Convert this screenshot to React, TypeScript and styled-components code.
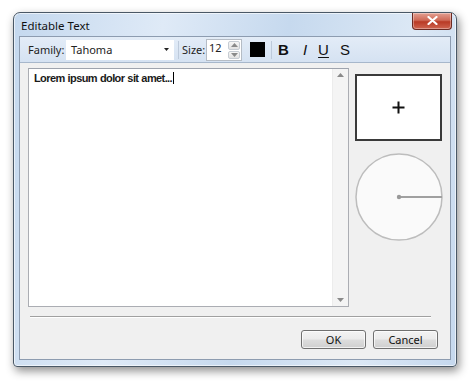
import React from 'react';
import styled, { createGlobalStyle } from 'styled-components';

const GlobalStyle = createGlobalStyle`
	html, body {
		margin: 0;
		padding: 0;
		background: #fff;
		font-family: 'Noto Sans', 'Open Sans', Arial, sans-serif;
	}
`;

const Page = styled.div`
	width: 474px;
	height: 384px;
	padding: 12px 0 0 13px;
	box-sizing: border-box;
`;

const Frame = styled.div`
	width: 444px;
	height: 355px;
	box-sizing: border-box;
	border: 1px solid #4a5866;
	border-radius: 7px 7px 4px 4px;
	background: linear-gradient(100deg, #c4d8ee 0%, #dfeaf7 30%, #c6d9ee 55%, #dce8f5 80%, #c5d8ee 100%);
	box-shadow: 2px 4px 10px rgba(0, 0, 0, 0.45), inset 0 0 0 1px rgba(255, 255, 255, 0.6);
	display: flex;
	flex-direction: column;
	padding: 0 5px 6px 5px;
`;

const TitleBar = styled.div`
	height: 23px;
	display: flex;
	align-items: center;
	justify-content: space-between;
`;

const Title = styled.span`
	font-size: 11.5px;
	color: #111;
	padding: 0 0 0 2px;
	margin-top: 1px;
`;

const CloseButton = styled.div`
	width: 38px;
	height: 16px;
	margin-top: -7px;
	margin-right: -1px;
	border: 1px solid #6b2a22;
	border-top: none;
	border-radius: 0 0 4px 4px;
	background: linear-gradient(180deg, #e3a092 0%, #cf6a57 45%, #b93a25 55%, #cf6550 100%);
	display: flex;
	align-items: center;
	justify-content: center;
	box-shadow: inset 0 0 0 1px rgba(255, 255, 255, 0.35);
`;

const Client = styled.div`
	flex: 1;
	border: 1px solid #8d9cb0;
	background: #f0f0f0;
	display: flex;
	flex-direction: column;
`;

const Toolbar = styled.div`
	height: 25px;
	border-bottom: 1px solid #a7b7cb;
	background: linear-gradient(180deg, #e3ecf7 0%, #d5e2f2 100%);
	display: flex;
	align-items: center;
	padding: 0 0 0 8px;
	font-size: 11px;
	color: #222;
`;

const Label = styled.span<{ $w: number }>`
	width: ${(p) => p.$w}px;
	white-space: nowrap;
`;

const Combo = styled.div`
	width: 108px;
	height: 20px;
	background: #fff;
	display: flex;
	align-items: center;
	justify-content: space-between;
	padding: 0 5px 0 5px;
	box-sizing: border-box;
`;

const Sep = styled.div<{ $l: number; $r: number }>`
	width: 1px;
	height: 18px;
	background: #bdcadb;
	margin: 0 ${(p) => p.$r}px 0 ${(p) => p.$l}px;
`;

const Spin = styled.div`
	width: 36px;
	height: 22px;
	box-sizing: border-box;
	border: 1px solid #b5bcc5;
	background: #fff;
	display: flex;
	justify-content: space-between;
	margin-top: 1px;
`;

const SpinText = styled.span`
	font-size: 11px;
	line-height: 13px;
	padding: 1px 0 0 2px;
`;

const SpinButtons = styled.div`
	width: 12px;
	display: flex;
	flex-direction: column;
	padding: 1px 1px 1px 0;
	gap: 1px;
`;

const SpinBtn = styled.div`
	flex: 1;
	border: 1px solid #c6ccd3;
	border-radius: 2px;
	background: linear-gradient(180deg, #f6f6f6, #e2e2e2);
	display: flex;
	align-items: center;
	justify-content: center;
`;

const Swatch = styled.div`
	width: 15px;
	height: 15px;
	background: #000;
	margin-left: 8px;
`;

const StyleBtn = styled.span<{ $bold?: boolean; $italic?: boolean; $under?: boolean; $w: number; $gap: number }>`
	width: ${(p) => p.$w}px;
	margin-right: ${(p) => p.$gap}px;
	font-family: 'Liberation Sans', Arial, sans-serif;
	font-size: 15px;
	font-weight: ${(p) => (p.$bold ? 'bold' : 'normal')};
	font-style: ${(p) => (p.$italic ? 'italic' : 'normal')};
	text-decoration: ${(p) => (p.$under ? 'underline' : 'none')};
	text-underline-offset: 2px;
	color: #111;
	text-align: center;
`;

const Body = styled.div`
	flex: 1;
	display: flex;
	flex-direction: column;
	padding: 5px 0 0 8px;
`;

const Main = styled.div`
	display: flex;
	gap: 6px;
`;

const TextBox = styled.div`
	width: 321px;
	height: 239px;
	box-sizing: border-box;
	border: 1px solid #abadb3;
	border-top-color: #9ea3ad;
	background: #fff;
	display: flex;
`;

const TextArea = styled.div`
	flex: 1;
	padding: 3px 5px;
	font-family: 'Liberation Sans', Tahoma, sans-serif;
	font-size: 11px;
	font-weight: bold;
	letter-spacing: -0.6px;
	word-spacing: 0.5px;
	color: #1a1a1a;
`;

const Caret = styled.span`
	display: inline-block;
	width: 1px;
	height: 12px;
	margin-left: 1px;
	background: #000;
	vertical-align: -2px;
`;

const ScrollBar = styled.div`
	width: 15px;
	border-left: 1px solid #ececec;
	background: #f4f4f4;
	display: flex;
	flex-direction: column;
	justify-content: space-between;
	align-items: center;
	padding: 4px 0;
`;

const Side = styled.div`
	display: flex;
	flex-direction: column;
	padding-top: 6px;
	gap: 12px;
`;

const Pad = styled.div`
	width: 87px;
	height: 67px;
	box-sizing: border-box;
	border: 2px solid #3a3a3a;
	background: #fff;
	display: flex;
	align-items: center;
	justify-content: center;
`;

const Divider = styled.div`
	height: 1px;
	background: #a0a0a0;
	border-bottom: 1px solid #fff;
	margin: 9px 19px 0 2px;
`;

const Buttons = styled.div`
	display: flex;
	justify-content: flex-end;
	gap: 7px;
	padding: 12px 12px 0 0;
`;

const Button = styled.div`
	width: 65px;
	height: 19px;
	box-sizing: border-box;
	border: 1px solid #707070;
	border-radius: 3px;
	background: linear-gradient(180deg, #f3f3f3 0%, #ebebeb 48%, #dddddd 52%, #cfcfcf 100%);
	box-shadow: inset 0 0 0 1px rgba(255, 255, 255, 0.7);
	font-size: 11px;
	color: #111;
	display: flex;
	align-items: center;
	justify-content: center;
`;

const Arrow = ({ up }: { up?: boolean }) => (
	<svg width="7" height="4" viewBox="0 0 7 4">
		<path d={up ? 'M0 4 L3.5 0 L7 4 Z' : 'M0 0 L3.5 4 L7 0 Z'} fill="#8a8a8a" />
	</svg>
);

export default function App() {
	return (
		<Page>
			<GlobalStyle />
			<Frame>
				<TitleBar>
					<Title>Editable Text</Title>
					<CloseButton>
						<svg width="11" height="9" viewBox="0 0 11 9">
							<path d="M1.5 1 L9.5 8 M9.5 1 L1.5 8" stroke="#fff" strokeWidth="2.2" strokeLinecap="round" />
						</svg>
					</CloseButton>
				</TitleBar>
				<Client>
					<Toolbar>
						<Label $w={38}>Family:</Label>
						<Combo>
							<span>Tahoma</span>
							<svg width="5" height="3" viewBox="0 0 5 3">
								<path d="M0 0 L5 0 L2.5 3 Z" fill="#222" />
							</svg>
						</Combo>
						<Sep $l={4} $r={3} />
						<Label $w={24}>Size:</Label>
						<Spin>
							<SpinText>12</SpinText>
							<SpinButtons>
								<SpinBtn>
									<Arrow up />
								</SpinBtn>
								<SpinBtn>
									<Arrow />
								</SpinBtn>
							</SpinButtons>
						</Spin>
						<Swatch />
						<Sep $l={6} $r={6} />
						<StyleBtn $bold $w={11} $gap={13}>B</StyleBtn>
						<StyleBtn $italic $w={6} $gap={10}>I</StyleBtn>
						<StyleBtn $under $w={11} $gap={11}>U</StyleBtn>
						<StyleBtn $w={10} $gap={0}>S</StyleBtn>
					</Toolbar>
					<Body>
						<Main>
							<TextBox>
								<TextArea>
									Lorem ipsum dolor sit amet...<Caret />
								</TextArea>
								<ScrollBar>
									<Arrow up />
									<Arrow />
								</ScrollBar>
							</TextBox>
							<Side>
								<Pad>
									<svg width="13" height="13" viewBox="0 0 13 13">
										<path d="M6.5 0.5 V12.5 M0.5 6.5 H12.5" stroke="#111" strokeWidth="2" />
									</svg>
								</Pad>
								<svg width="88" height="88" viewBox="0 0 88 88">
									<circle cx="44" cy="44" r="43" fill="#fafafa" stroke="#bdbdbd" strokeWidth="1.5" />
									<line x1="44" y1="44" x2="87" y2="44" stroke="#a0a0a0" strokeWidth="2" />
									<circle cx="44" cy="44" r="2.2" fill="#999" />
								</svg>
							</Side>
						</Main>
						<Divider />
						<Buttons>
							<Button>OK</Button>
							<Button>Cancel</Button>
						</Buttons>
					</Body>
				</Client>
			</Frame>
		</Page>
	);
}
